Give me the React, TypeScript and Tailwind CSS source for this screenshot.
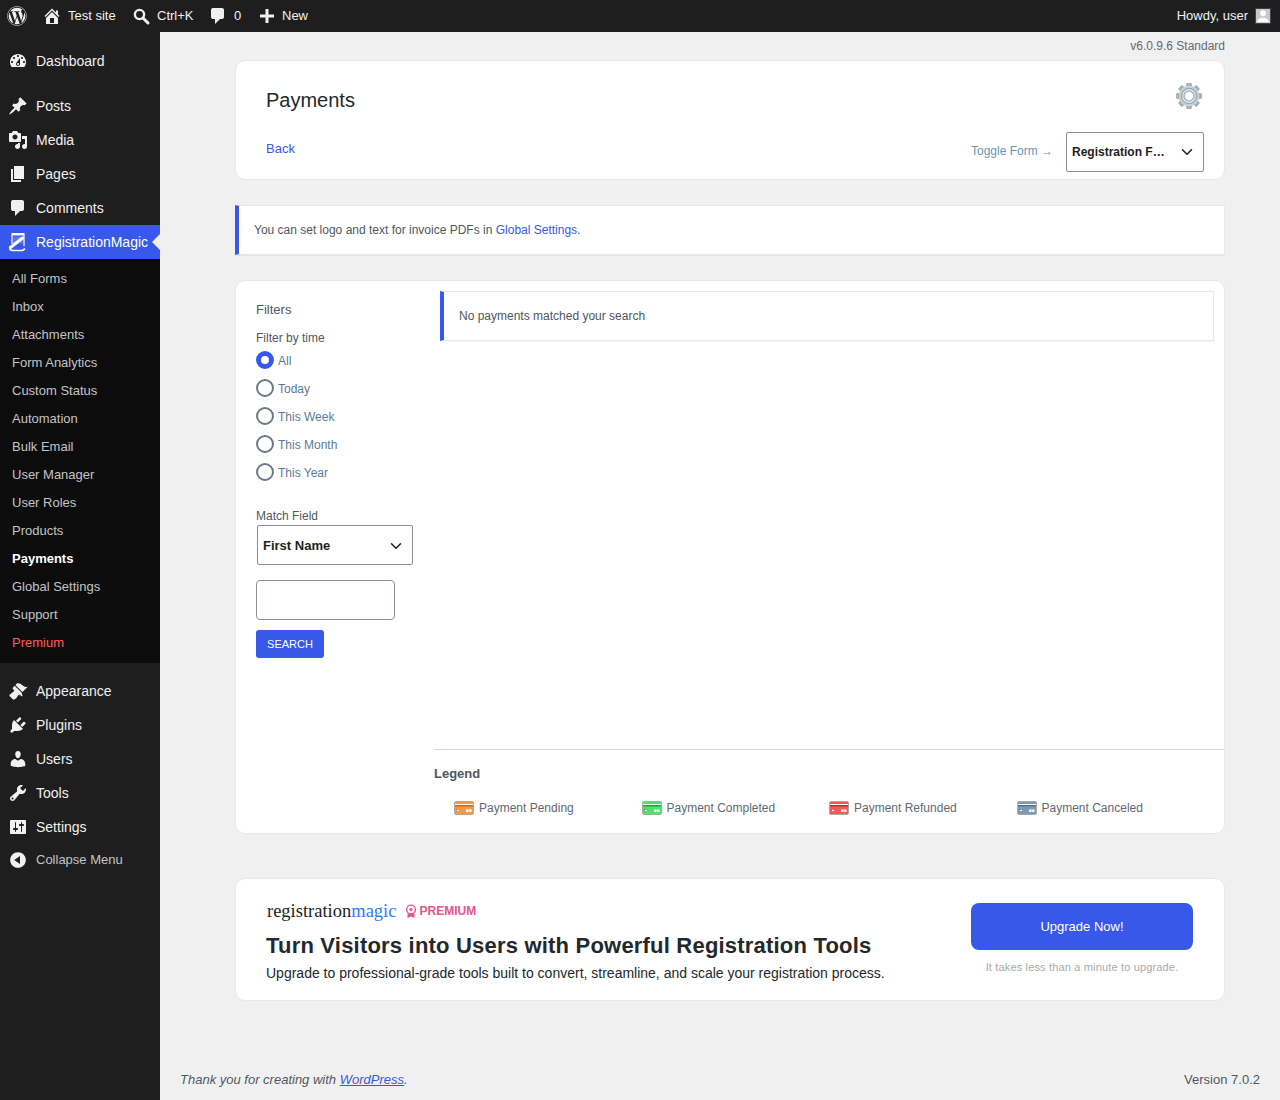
import { FaWordpress } from "react-icons/fa";
import { ChevronDown } from "lucide-react";

const ICONS: Record<string, string> = {
  home: "M16 8.5l1.53 1.53-1.06 1.06L10 4.62l-6.47 6.47-1.06-1.06L10 2.5l4 4v-2h2v4zm-6-2.46l6 5.99V18H4v-5.97zM12 17v-5H8v5h4z",
  comment: "M5 2h9c1.1 0 2 .9 2 2v7c0 1.1-.9 2-2 2h-2l-5 5v-5H5c-1.1 0-2-.9-2-2V4c0-1.1.9-2 2-2z",
  dashboard:
    "M3.76 16h12.48c1.1-1.37 1.76-3.11 1.76-5 0-4.42-3.58-8-8-8s-8 3.58-8 8c0 1.89.66 3.63 1.76 5zM10 4c.55 0 1 .45 1 1s-.45 1-1 1-1-.45-1-1 .45-1 1-1zM6 6c.55 0 1 .45 1 1s-.45 1-1 1-1-.45-1-1 .45-1 1-1zm8 0c.55 0 1 .45 1 1s-.45 1-1 1-1-.45-1-1 .45-1 1-1zm-5.37 5.55L12 7v6c0 1.1-.9 2-2 2s-2-.9-2-2c0-.57.24-1.08.63-1.45zM4 10c.55 0 1 .45 1 1s-.45 1-1 1-1-.45-1-1 .45-1 1-1zm12 0c.55 0 1 .45 1 1s-.45 1-1 1-1-.45-1-1 .45-1 1-1zm-5 3c0-.55-.45-1-1-1s-1 .45-1 1 .45 1 1 1 1-.45 1-1z",
  post: "M10.44 3.02l1.82-1.82 6.36 6.35-1.83 1.82c-1.05-.68-2.48-.57-3.41.36l-.75.75c-.92.93-1.04 2.35-.35 3.41l-1.83 1.82-2.41-2.41-2.8 2.79c-.42.42-3.38 2.71-3.8 2.29s1.86-3.39 2.28-3.81l2.79-2.79L4.1 9.36l1.83-1.82c1.05.69 2.48.57 3.4-.36l.75-.75c.93-.92 1.05-2.35.36-3.41z",
  media:
    "M13 11V4c0-.55-.45-1-1-1h-1.67L9 1H5L3.67 3H2c-.55 0-1 .45-1 1v7c0 .55.45 1 1 1h10c.55 0 1-.45 1-1zM7 4.5c1.38 0 2.5 1.12 2.5 2.5S8.38 9.5 7 9.5 4.5 8.38 4.5 7 5.62 4.5 7 4.5zM14 6h5v10.5c0 1.38-1.12 2.5-2.5 2.5S14 17.88 14 16.5s1.12-2.5 2.5-2.5c.17 0 .34.02.5.05V9h-3V6zm-4 8.05V13h2v3.5c0 1.38-1.12 2.5-2.5 2.5S7 17.88 7 16.5 8.12 14 9.5 14c.17 0 .34.02.5.05z",
  page: "M6 15V2h10v13H6zm-1 1h8v2H3V5h2v11z",
  appearance:
    "M14.48 11.06L7.41 3.99l1.5-1.5c.5-.56 2.3-.47 3.51.32 1.21.8 1.43 1.28 2.91 2.1 1.18.64 2.45 1.26 4.45.85zm-.71.71L6.7 4.7 4.93 6.47c-.39.39-.39 1.02 0 1.41l1.06 1.06c.39.39.39 1.03 0 1.42-.6.6-1.43 1.11-2.21 1.69-.35.26-.7.53-1.01.84C1.43 13.23.99 14.5 1.7 15.21l3.09 3.09c.71.71 1.98.27 3.3-1.07.31-.31.58-.66.84-1.01.58-.78 1.09-1.61 1.69-2.21.39-.39 1.02-.39 1.41 0l1.06 1.06c.39.39 1.02.39 1.41 0z",
  plugins:
    "M13.11 4.36L9.87 7.6 8 5.73l3.24-3.24c.35-.34 1.05-.2 1.56.32.52.51.66 1.21.31 1.55zm-8 1.77l.91-1.12 9.01 9.01-1.19.84c-.71.71-2.63 1.16-3.82 1.16H6.14L4.9 17.26c-.59.59-1.54.59-2.12 0-.59-.58-.59-1.53 0-2.12l1.24-1.24v-3.88c0-1.13.4-3.19 1.09-3.89zm7.26 3.97l3.24-3.24c.34-.35 1.04-.21 1.55.31.52.51.66 1.21.31 1.55l-3.24 3.25z",
  users:
    "M10 9.25c-2.27 0-2.73-3.44-2.73-3.44C7 4.02 7.82 2 9.97 2c2.16 0 2.98 2.02 2.71 3.81 0 0-.41 3.44-2.68 3.44zm0 2.57L12.72 10c2.39 0 4.52 2.33 4.52 4.53v2.49s-3.65 1.13-7.24 1.13c-3.65 0-7.24-1.13-7.24-1.13v-2.49c0-2.25 1.94-4.48 4.47-4.48z",
  tools:
    "M16.68 9.77c-1.34 1.34-3.3 1.67-4.95.99l-5.41 6.52c-.99.99-2.59.99-3.58 0s-.99-2.59 0-3.57l6.52-5.42c-.68-1.65-.35-3.61.99-4.95 1.28-1.28 3.12-1.62 4.72-1.06l-2.89 2.89 2.82 2.82 2.86-2.87c.53 1.58.18 3.39-1.08 4.65zM3.81 16.21c.4.39 1.04.39 1.43 0 .4-.4.4-1.04 0-1.43-.39-.4-1.03-.4-1.43 0-.39.39-.39 1.03 0 1.43z",
  settings:
    "M18 16V4c0-.55-.45-1-1-1H3c-.55 0-1 .45-1 1v12c0 .55.45 1 1 1h14c.55 0 1-.45 1-1zM8 11h1c.55 0 1 .45 1 1s-.45 1-1 1H8v1.5c0 .28-.22.5-.5.5s-.5-.22-.5-.5V13H6c-.55 0-1-.45-1-1s.45-1 1-1h1V5.5c0-.28.22-.5.5-.5s.5.22.5.5V11zm5-2h-1c-.55 0-1-.45-1-1s.45-1 1-1h1V5.5c0-.28.22-.5.5-.5s.5.22.5.5V7h1c.55 0 1 .45 1 1s-.45 1-1 1h-1v5.5c0 .28-.22.5-.5.5s-.5-.22-.5-.5V9z",
  collapse: "M10 2.16c4.33 0 7.84 3.51 7.84 7.84s-3.51 7.84-7.84 7.84S2.16 14.33 2.16 10 5.71 2.16 10 2.16zm2 11.72V6.12L6.18 9.97z",
  plus: "M8.5 3h3v5.5H17v3h-5.5V17h-3v-5.5H3v-3h5.5z",
};

function Dashicon({ name, size = 20 }: { name: string; size?: number }) {
  return (
    <svg viewBox="0 0 20 20" width={size} height={size} fill="currentColor" className="shrink-0">
      <path d={ICONS[name]} />
    </svg>
  );
}

function SearchIcon() {
  return (
    <svg viewBox="0 0 20 20" width={20} height={20} fill="none" stroke="currentColor" className="shrink-0">
      <circle cx="8.5" cy="8.5" r="4.6" strokeWidth="2.4" />
      <path d="M12 12l5 5" strokeWidth="3" strokeLinecap="round" />
    </svg>
  );
}

function MagicIcon() {
  return (
    <svg viewBox="0 0 20 20" width={20} height={20} className="shrink-0" fill="none" stroke="currentColor">
      <path d="M3.5 1h13v2.4h-13z" fill="currentColor" stroke="none" />
      <path d="M4 3v9M16 3v11" strokeWidth="1.2" />
      <path d="M5 4.5h10v7H5z" fill="currentColor" stroke="none" opacity="0.2" />
      <path d="M2.5 15.5L14.5 6" strokeWidth="3" strokeLinecap="round" />
      <path d="M1.5 16.5c1 1.8 2 2 3 2h10l2.5-1.8" strokeWidth="1.7" />
    </svg>
  );
}

function GearIcon() {
  const teeth = [0, 45, 90, 135, 180, 225, 270, 315];
  return (
    <svg viewBox="0 0 26 26" width={26} height={26}>
      {teeth.map((deg) => (
        <rect key={deg} x="10.3" y="0.3" width="5.4" height="25.4" rx="1" fill="#a3afbb" transform={`rotate(${deg} 13 13)`} />
      ))}
      <circle cx="13" cy="13" r="10.4" fill="#c9d1d9" />
      <circle cx="13" cy="13" r="7.6" fill="#e8ecef" stroke="#9aa7b3" strokeWidth="1.4" />
      <circle cx="13" cy="13" r="5" fill="#fff" stroke="#aab5c0" strokeWidth="1.6" />
    </svg>
  );
}

function CardIcon({ fill, band }: { fill: string; band: string }) {
  return (
    <svg viewBox="0 0 20 14" width={20} height={14} className="shrink-0">
      <rect x="0.5" y="0.5" width="19" height="13" rx="1.5" fill={fill} stroke="#a9a9a9" />
      <rect x="1" y="3" width="18" height="1" fill="#fff" />
      <rect x="1" y="4" width="18" height="1.4" fill={band} />
      <rect x="2.5" y="8.5" width="3" height="2" fill="#fff" stroke={band} strokeWidth="0.5" />
      <rect x="12" y="8.5" width="5.5" height="2.4" fill="#fff" />
      <path d="M14.7 8.5v2.4" stroke={fill} strokeWidth="0.6" />
    </svg>
  );
}

function RibbonIcon() {
  return (
    <svg viewBox="0 0 12 15" width={12} height={15} className="shrink-0" fill="none" stroke="#e8548d">
      <circle cx="6" cy="5.5" r="4.4" strokeWidth="1.4" />
      <circle cx="6" cy="5.5" r="1.6" fill="#e8548d" stroke="none" />
      <path d="M2.5 9.5V14l3.5-1.6L9.5 14V9.5" fill="#e8548d" stroke="none" />
    </svg>
  );
}

function MenuItem({ icon, label, active }: { icon: string; label: string; active?: boolean }) {
  return (
    <div className={`relative flex h-[34px] items-center pl-[8px] text-[14px] ${active ? "bg-[#3858e9] text-white" : "text-[#f0f0f1]"}`}>
      <span className="flex w-[28px]">{icon === "magic" ? <MagicIcon /> : <Dashicon name={icon} />}</span>
      {label}
      {active && <span className="absolute right-0 top-[9px] h-0 w-0 border-y-[8px] border-r-[8px] border-y-transparent border-r-[#f0f0f1]" />}
    </div>
  );
}

const SUBMENU = [
  "All Forms",
  "Inbox",
  "Attachments",
  "Form Analytics",
  "Custom Status",
  "Automation",
  "Bulk Email",
  "User Manager",
  "User Roles",
  "Products",
  "Payments",
  "Global Settings",
  "Support",
  "Premium",
];

function Sidebar() {
  return (
    <aside className="w-[160px] shrink-0 bg-[#1e1e1e] pt-[12px]">
      <MenuItem icon="dashboard" label="Dashboard" />
      <div className="h-[11px]" />
      <MenuItem icon="post" label="Posts" />
      <MenuItem icon="media" label="Media" />
      <MenuItem icon="page" label="Pages" />
      <MenuItem icon="comment" label="Comments" />
      <MenuItem icon="magic" label="RegistrationMagic" active />
      <ul className="bg-[#0c0c0c] pb-[6px] pt-[6px] text-[13px]">
        {SUBMENU.map((item) => (
          <li
            key={item}
            className={`flex h-[28px] items-center pl-[12px] ${
              item === "Payments" ? "font-bold text-white" : item === "Premium" ? "text-[#ff5c5c]" : "text-[#c3c4c7]"
            }`}
          >
            {item}
          </li>
        ))}
      </ul>
      <div className="h-[11px]" />
      <MenuItem icon="appearance" label="Appearance" />
      <MenuItem icon="plugins" label="Plugins" />
      <MenuItem icon="users" label="Users" />
      <MenuItem icon="tools" label="Tools" />
      <MenuItem icon="settings" label="Settings" />
      <div className="flex h-[32px] items-center pl-[8px] text-[13px] text-[#c3c4c7]">
        <span className="flex w-[28px] text-[#f0f0f1]">
          <Dashicon name="collapse" />
        </span>
        Collapse Menu
      </div>
    </aside>
  );
}

function TopBar() {
  return (
    <header className="flex h-[32px] items-center bg-[#1e1e1e] text-[13px] text-[#f0f0f1]">
      <span className="ml-[7px] flex w-[35px]">
        <FaWordpress size={20} />
      </span>
      <span className="flex w-[89px] items-center gap-[6px]">
        <Dashicon name="home" />
        Test site
      </span>
      <span className="flex w-[77px] items-center gap-[6px]">
        <SearchIcon />
        Ctrl+K
      </span>
      <span className="flex w-[49px] items-center gap-[5px]">
        <Dashicon name="comment" />
        <span className="ml-[1px]">0</span>
      </span>
      <span className="flex items-center gap-[5px]">
        <Dashicon name="plus" />
        New
      </span>
      <span className="ml-auto mr-[9px] flex items-center gap-[7px]">
        Howdy, user
        <span className="flex h-[16px] w-[16px] items-end justify-center overflow-hidden border border-[#3c434a] bg-[#c8c8c8]">
          <svg viewBox="0 0 16 16" width={16} height={16} fill="#fff">
            <circle cx="8" cy="6" r="3.4" />
            <path d="M1.5 16c.3-4 3-5 6.5-5s6.2 1 6.5 5z" />
          </svg>
        </span>
      </span>
    </header>
  );
}

function SelectBox({ label, className }: { label: string; className: string }) {
  return (
    <div className={`flex h-[40px] items-center justify-between rounded-[2px] border border-[#8c8f94] bg-white pl-[5px] pr-[7px] font-bold text-[#1e1e1e] ${className}`}>
      <span>{label}</span>
      <ChevronDown size={18} strokeWidth={2} />
    </div>
  );
}

const TIME_FILTERS = ["All", "Today", "This Week", "This Month", "This Year"];

const LEGEND = [
  { label: "Payment Pending", fill: "#f2994a", band: "#b8661f" },
  { label: "Payment Completed", fill: "#4fe36b", band: "#249a3e" },
  { label: "Payment Refunded", fill: "#ef5b5b", band: "#b83232" },
  { label: "Payment Canceled", fill: "#7d9ab3", band: "#4f6f8a" },
];

function Notice({ children, className }: { children: React.ReactNode; className: string }) {
  return (
    <div className={`flex h-[50px] items-center border border-l-4 border-[#e6e8eb] border-l-[#3858e9] bg-white text-[12px] text-[#50575e] shadow-[0_1px_1px_rgba(0,0,0,0.04)] ${className}`}>
      {children}
    </div>
  );
}

function PaymentsCard() {
  return (
    <section className="mt-[25px] flex h-[554px] rounded-[10px] border border-[#e6e8eb] bg-white">
      <div className="w-[198px] shrink-0 pl-[20px] text-[12px] text-[#50575e]">
        <p className="mt-[21px] text-[13px] leading-[15px]">Filters</p>
        <p className="mt-[14px] leading-[14px]">Filter by time</p>
        <div className="mt-[5px]">
          {TIME_FILTERS.map((time, i) => (
            <div key={time} className="flex h-[28px] items-start gap-[4px]">
              {i === 0 ? (
                <span className="mt-[1px] h-[18px] w-[18px] rounded-full border-[5px] border-[#3858e9] bg-white" />
              ) : (
                <span className="mt-[1px] h-[18px] w-[18px] rounded-full border-2 border-[#6d7985] bg-white" />
              )}
              <span className="mt-[4px] leading-[14px] text-[#5b7a99]">{time}</span>
            </div>
          ))}
        </div>
        <p className="mt-[19px] leading-[14px]">Match Field</p>
        <SelectBox label="First Name" className="ml-[1px] mt-[2px] w-[156px] pt-[2px] text-[13px]" />
        <div className="mt-[15px] h-[40px] w-[139px] rounded-[4px] border border-[#8c8f94] bg-white" />
        <button className="mt-[10px] h-[28px] w-[68px] rounded-[3px] bg-[#3858e9] text-[11px] text-white">SEARCH</button>
      </div>
      <div className="flex min-w-0 flex-1 flex-col">
        <div className="h-[469px] border-b border-[#d5d8dc] pl-[6px] pr-[10px] pt-[10px]">
          <Notice className="pl-[15px]">No payments matched your search</Notice>
        </div>
        <p className="mt-[16px] text-[13px] font-bold leading-[15px] text-[#50575e]">Legend</p>
        <div className="mt-[18px] grid grid-cols-4 pl-[20px] pr-[20px] text-[12px] text-[#646970]">
          {LEGEND.map((item) => (
            <span key={item.label} className="flex items-center gap-[5px]">
              <CardIcon fill={item.fill} band={item.band} />
              {item.label}
            </span>
          ))}
        </div>
      </div>
    </section>
  );
}

export default function App() {
  return (
    <div className="flex h-[1100px] flex-col overflow-hidden bg-[#f0f0f1] font-['Liberation_Sans',Arial,sans-serif]">
      <TopBar />
      <div className="flex min-h-0 flex-1">
        <Sidebar />
        <main className="flex min-w-0 flex-1 flex-col pb-[11px] pl-[75px] pr-[55px]">
          <p className="mt-[7px] text-right text-[12px] leading-[14px] text-[#646970]">v6.0.9.6 Standard</p>
          <section className="relative mt-[7px] h-[120px] rounded-[10px] border border-[#e6e8eb] bg-white pl-[30px]">
            <h1 className="mt-[28px] text-[20px] leading-[22px] text-[#23282d]">Payments</h1>
            <a className="mt-[30px] block text-[13px] leading-[16px] text-[#3858e9]">Back</a>
            <span className="absolute right-[171px] top-[81px] text-[12px] text-[#6a94b8]">Toggle Form →</span>
            <SelectBox label="Registration F…" className="absolute right-[20px] top-[71px] w-[138px] text-[12px]" />
            <span className="absolute right-[22px] top-[22px]">
              <GearIcon />
            </span>
          </section>
          <Notice className="mt-[25px] pl-[15px]">
            <span>
              You can set logo and text for invoice PDFs in <a className="text-[#3858e9]">Global Settings</a>.
            </span>
          </Notice>
          <PaymentsCard />
          <section className="mt-[44px] flex h-[123px] rounded-[10px] border border-[#e6e8eb] bg-white pl-[30px] pr-[31px]">
            <div className="flex-1">
              <div className="mt-[21px] flex items-center">
                <span className="ml-[1px] font-['Liberation_Serif',serif] text-[18.5px] leading-[22px] text-[#1e1e1e]">
                  registration<span className="text-[#2f7bf5]">magic</span>
                </span>
                <span className="ml-[9px] flex items-center gap-[2px] text-[12px] font-bold text-[#e8548d]">
                  <RibbonIcon />
                  PREMIUM
                </span>
              </div>
              <h2 className="mt-[11px] text-[22px] font-bold leading-[26px] tracking-[0.2px] text-[#23282d]">Turn Visitors into Users with Powerful Registration Tools</h2>
              <p className="mt-[5px] text-[14px] leading-[18px] text-[#23282d]">Upgrade to professional-grade tools built to convert, streamline, and scale your registration process.</p>
            </div>
            <div className="w-[222px] shrink-0 pt-[24px] text-center">
              <button className="h-[47px] w-full rounded-[8px] bg-[#3858e9] text-[13px] text-white">Upgrade Now!</button>
              <p className="mt-[10px] text-[11px] leading-[14px] tracking-[0.16px] text-[#a7aaad]">It takes less than a minute to upgrade.</p>
            </div>
          </section>
          <footer className="-mr-[35px] -ml-[55px] mt-auto flex items-center justify-between text-[13px] text-[#50575e]">
            <span className="italic">
              Thank you for creating with <a className="text-[#3858e9] underline">WordPress</a>.
            </span>
            <span>Version 7.0.2</span>
          </footer>
        </main>
      </div>
    </div>
  );
}
